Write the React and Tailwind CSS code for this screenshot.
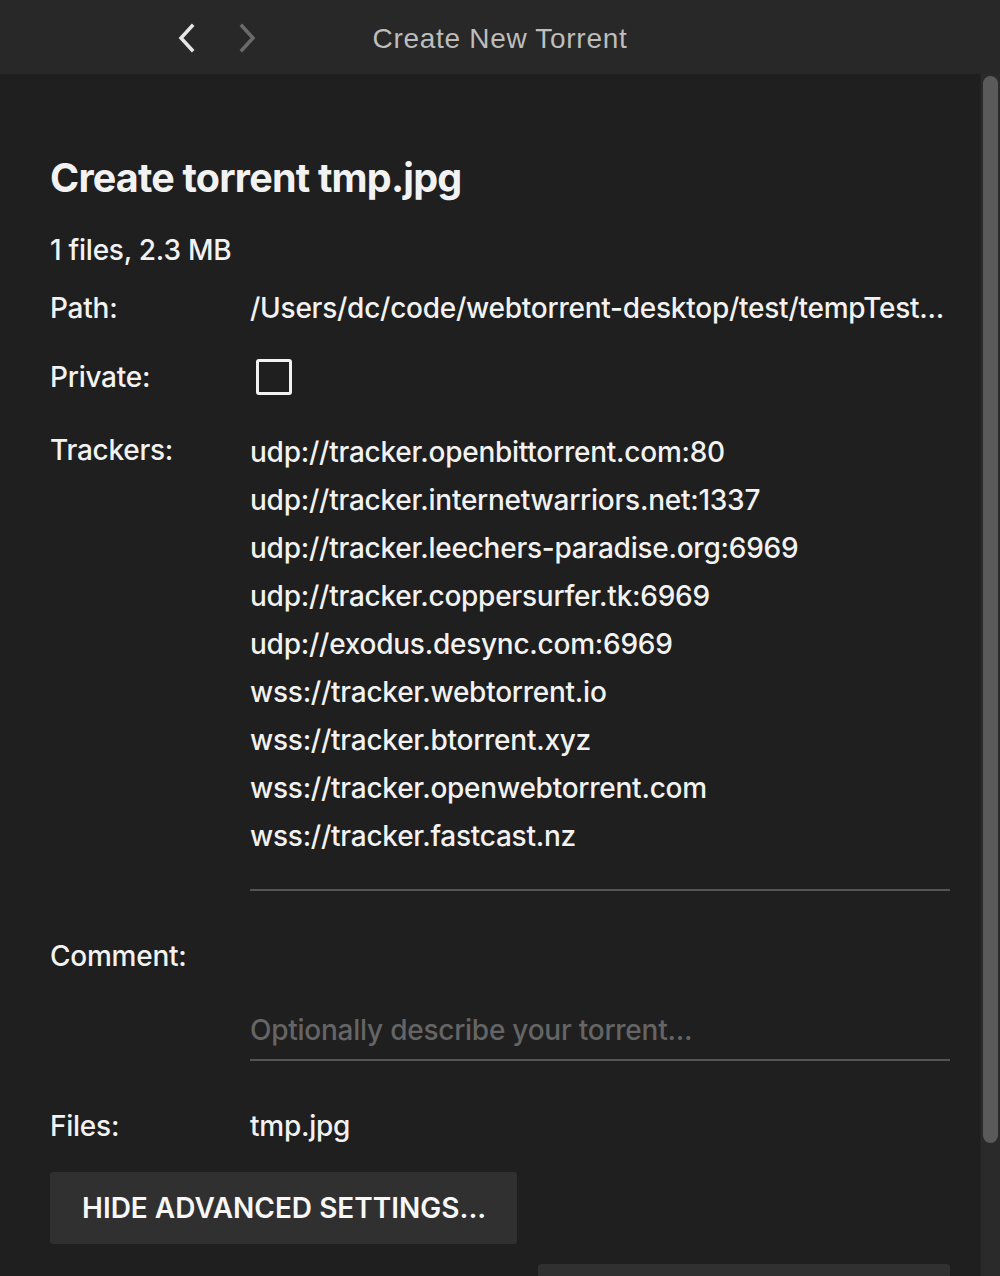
import React from "react";

const trackers = [
  "udp://tracker.openbittorrent.com:80",
  "udp://tracker.internetwarriors.net:1337",
  "udp://tracker.leechers-paradise.org:6969",
  "udp://tracker.coppersurfer.tk:6969",
  "udp://exodus.desync.com:6969",
  "wss://tracker.webtorrent.io",
  "wss://tracker.btorrent.xyz",
  "wss://tracker.openwebtorrent.com",
  "wss://tracker.fastcast.nz",
];

export default function App() {
  return (
    <div
      className="w-[1000px] h-[1276px] overflow-hidden bg-[#1f1f1f] text-[#f2f2f2] flex flex-col"
      style={{ fontFamily: "Inter, 'Noto Sans', sans-serif" }}
    >
      <header className="h-[74px] shrink-0 bg-[#282828] relative flex items-center justify-center">
        <div className="absolute left-[170px] top-[21px] flex items-center gap-[26px]">
          <svg width="34" height="34" viewBox="0 0 34 34">
            <path d="M22 5 L11 17 L22 29" fill="none" stroke="#e6e6e6" strokeWidth="3.5" strokeLinecap="square" />
          </svg>
          <svg width="34" height="34" viewBox="0 0 34 34">
            <path d="M12 5 L23 17 L12 29" fill="none" stroke="#6a6a6a" strokeWidth="3.5" strokeLinecap="square" />
          </svg>
        </div>
        <div
          className="mt-[3px] text-[28px] text-[#bdbdbd] tracking-[0.7px]"
          style={{ fontFamily: "'Liberation Sans', Arial, sans-serif" }}
        >
          Create New Torrent
        </div>
      </header>
      <div className="flex flex-1 min-h-0">
        <main className="flex-1 min-w-0 pl-[50px] pr-[30px] pt-[81px] font-medium tracking-[-0.25px]">
          <h1 className="text-[39.5px] font-bold leading-[46px] tracking-[-0.8px] text-[#f2f2f2]">
            Create torrent tmp.jpg
          </h1>
          <div className="mt-[32px] text-[28px] leading-[34px]">1 files, 2.3 MB</div>
          <div className="mt-[24px] flex text-[28px] leading-[34px]">
            <div className="w-[200px] shrink-0">Path:</div>
            <div className="whitespace-nowrap">/Users/dc/code/webtorrent-desktop/test/tempTest...</div>
          </div>
          <div className="mt-[34px] flex items-center text-[28px] leading-[34px]">
            <div className="w-[206px] shrink-0">Private:</div>
            <div className="w-[36px] h-[36px] border-[3px] border-[#f2f2f2] rounded-[3px]" />
          </div>
          <div className="mt-[33px] flex text-[28px]">
            <div className="w-[200px] shrink-0 pt-[5px] leading-[34px]">Trackers:</div>
            <div className="w-[700px]">
              <div className="flex flex-col pb-[29px] border-b-2 border-[#555555]">
                {trackers.map((t) => (
                  <div key={t} className="leading-[48px]">{t}</div>
                ))}
              </div>
            </div>
          </div>
          <div className="mt-[48px] text-[28px] leading-[34px]">Comment:</div>
          <div className="flex">
            <div className="w-[200px] shrink-0" />
            <div className="w-[700px] mt-[40px] pb-[12px] border-b-2 border-[#555555] text-[28px] leading-[34px] text-[#656565]">
              Optionally describe your torrent...
            </div>
          </div>
          <div className="mt-[48px] flex text-[28px] leading-[34px]">
            <div className="w-[200px] shrink-0">Files:</div>
            <div>tmp.jpg</div>
          </div>
          <div className="mt-[29px] w-[467px] h-[72px] bg-[#303030] rounded-[3px] flex items-center pl-[32px] text-[28px] font-semibold tracking-[0px] text-[#f7f7f7]">
            HIDE ADVANCED SETTINGS...
          </div>
          <div className="mt-[20px] ml-[488px] w-[412px] h-[40px] bg-[#303030] rounded-[4px]" />
        </main>
        <div className="w-[20px] shrink-0 bg-[#2a2a2a] border-l border-[#242424] pt-[2px] pl-[2px] pr-[2px]">
          <div className="h-[1067px] bg-[#5a5a5a] rounded-full" />
        </div>
      </div>
    </div>
  );
}
